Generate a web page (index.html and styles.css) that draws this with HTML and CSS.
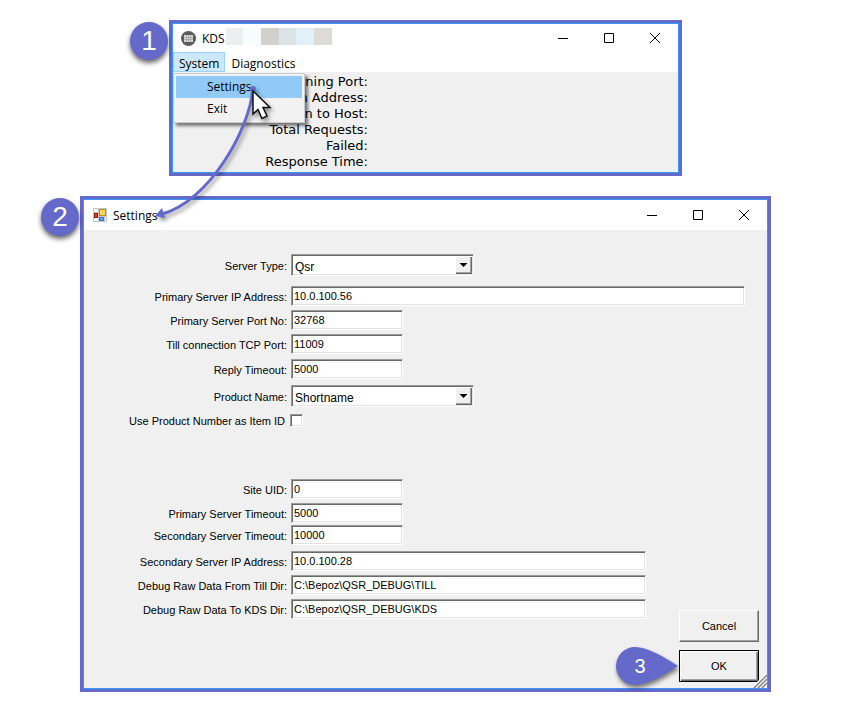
FILE: index.html
```
<!DOCTYPE html>
<html lang="en">
<head>
  <meta charset="UTF-8">
  <meta name="viewport" content="width=device-width, initial-scale=1">
  <title>KDS Settings</title>
  <link rel="stylesheet" href="styles.css">
</head>
<body>

<main class="guide">

  <section class="window main-window">
    <span class="badge">1</span>
    <div class="frame">
      <header class="titlebar">
        <svg class="app-icon" width="15" height="15" viewBox="0 0 15 15">
          <circle cx="7.5" cy="7.5" r="7.5" fill="#5c5c5c"/>
          <rect x="3" y="4" width="9" height="7" fill="#d8d8d8"/>
          <path d="M3 6.5h9M3 8.5h9M5.5 4v7M7.5 4v7M9.5 4v7" stroke="#999" stroke-width="0.6"/>
        </svg>
        <h1>KDS</h1>
        <div class="swatches"><i></i><i></i><i></i><i></i><i></i><i></i></div>
        <div class="controls">
          <button type="button" aria-label="Minimize"><svg width="10" height="10"><path d="M0 5.5h10"/></svg></button>
          <button type="button" aria-label="Maximize"><svg width="10" height="10"><path d="M.5.5h9v9h-9z"/></svg></button>
          <button type="button" aria-label="Close"><svg width="10" height="10"><path d="M0 0l10 10M10 0L0 10"/></svg></button>
        </div>
      </header>
      <nav class="menubar">
        <div class="menu">
          <button type="button" class="menu-item open">System</button>
          <div class="dropdown">
            <button type="button" class="selected">Settings</button>
            <button type="button">Exit</button>
          </div>
        </div>
        <button type="button" class="menu-item">Diagnostics</button>
      </nav>
      <ul class="stats">
        <li>Listening Port:</li>
        <li>Station Address:</li>
        <li>Connection to Host:</li>
        <li>Total Requests:</li>
        <li>Failed:</li>
        <li>Response Time:</li>
      </ul>
    </div>
  </section>

  <section class="window settings-window">
    <span class="badge">2</span>
    <div class="frame">
      <header class="titlebar">
        <svg class="app-icon" width="14" height="14" viewBox="0 0 14 14">
          <path d="M.5.5h13v13H.5zM.5 4.5h5M5.5.5v13M.5 9.5h5M5.5 8.5h8M11.5 8.5v5" fill="#fff" stroke="#c3c3c3"/>
          <rect x="6.5" y="1.5" width="6" height="6" fill="#fbd75b" stroke="#c09010"/>
          <rect x="1.5" y="5.5" width="3" height="4" fill="#d8432c" stroke="#a01808"/>
          <rect x="6.5" y="9.5" width="4" height="3" fill="#5b9bf0" stroke="#3c78d8"/>
        </svg>
        <h2>Settings</h2>
        <div class="controls">
          <button type="button" aria-label="Minimize"><svg width="10" height="10"><path d="M0 5.5h10"/></svg></button>
          <button type="button" aria-label="Maximize"><svg width="10" height="10"><path d="M.5.5h9v9h-9z"/></svg></button>
          <button type="button" aria-label="Close"><svg width="10" height="10"><path d="M0 0l10 10M10 0L0 10"/></svg></button>
        </div>
      </header>

      <form class="settings">
        <div class="fields server">
          <div class="row select-row">
            <label for="server-type">Server Type:</label>
            <span class="combo">
              <select id="server-type"><option>Qsr</option></select>
              <svg class="combo-arrow" width="17" height="18"><path d="M4.5 7h8l-4 4z"/></svg>
            </span>
          </div>
          <div class="row wide-gap">
            <label for="primary-ip">Primary Server IP Address:</label>
            <input class="long" id="primary-ip" type="text" value="10.0.100.56">
          </div>
          <div class="row">
            <label for="primary-port">Primary Server Port No:</label>
            <input id="primary-port" type="text" value="32768">
          </div>
          <div class="row">
            <label for="till-port">Till connection TCP Port:</label>
            <input id="till-port" type="text" value="11009">
          </div>
          <div class="row loose-gap">
            <label for="reply-timeout">Reply Timeout:</label>
            <input id="reply-timeout" type="text" value="5000">
          </div>
          <div class="row select-row mid-gap">
            <label for="product-name">Product Name:</label>
            <span class="combo">
              <select id="product-name"><option>Shortname</option></select>
              <svg class="combo-arrow" width="17" height="18"><path d="M4.5 7h8l-4 4z"/></svg>
            </span>
          </div>
          <div class="row check-row mid-gap">
            <label for="use-number">Use Product Number as Item ID</label>
            <input id="use-number" type="checkbox">
          </div>
        </div>

        <div class="bottom">
          <div class="fields site">
            <div class="row">
              <label for="site-uid">Site UID:</label>
              <input id="site-uid" type="text" value="0">
            </div>
            <div class="row">
              <label for="primary-timeout">Primary Server Timeout:</label>
              <input id="primary-timeout" type="text" value="5000">
            </div>
            <div class="row tight-gap">
              <label for="secondary-timeout">Secondary Server Timeout:</label>
              <input id="secondary-timeout" type="text" value="10000">
            </div>
            <div class="row mid-gap">
              <label for="secondary-ip">Secondary Server IP Address:</label>
              <input class="long" id="secondary-ip" type="text" value="10.0.100.28">
            </div>
            <div class="row">
              <label for="debug-till">Debug Raw Data From Till Dir:</label>
              <input class="long" id="debug-till" type="text" value="C:\Bepoz\QSR_DEBUG\TILL">
            </div>
            <div class="row">
              <label for="debug-kds">Debug Raw Data To KDS Dir:</label>
              <input class="long" id="debug-kds" type="text" value="C:\Bepoz\QSR_DEBUG\KDS">
            </div>
          </div>
          <div class="actions">
            <button type="button">Cancel</button>
            <div class="ok">
              <button type="button" class="default">OK</button>
              <div class="callout">
                <svg width="63" height="38"><path d="M62 19C48 10 32 0 19 0A19 19 0 0 0 19 38C32 38 48 28 62 19z"/></svg>
                <span>3</span>
              </div>
            </div>
          </div>
        </div>
      </form>
      <svg class="grip" width="14" height="14"><path d="M0 14L14 0M5 14l9-9M10 14l4-4" stroke="#fff" stroke-width="3"/><path d="M1 14L14 1M5 14l9-9M9 14l5-5" stroke="#808080" stroke-width="1.5"/></svg>
    </div>
  </section>

  <!-- arrow from the menu entry to the window that it opens, and the pointer -->
  <svg class="flow-arrow" width="130" height="145" viewBox="150 80 130 145">
    <g class="shadowed">
      <path d="M253 88C250 130 208 202 162 214" fill="none" stroke="#6569ca" stroke-width="3"/>
      <circle cx="253" cy="89" r="3" fill="#6569ca"/>
      <path d="M155 216L162 208L165 218z" fill="#6569ca"/>
    </g>
    <path class="shadowed" d="M253 91V114L258 109.500L262 118.500L267 116L263 107.500H270z" fill="#fff" stroke="#111" stroke-width="1.5"/>
  </svg>

</main>

</body>
</html>
```

FILE: styles.css
```
* {
  box-sizing: border-box;
}
body {
  margin: 0;
  background: #fff;
  color: #000;
  font-family: "Open Sans", "Noto Sans", sans-serif;
  font-size: 12px;
}
button, input, select {
  font: inherit;
  color: inherit;
}
.guide {
  position: relative;
  padding: 20px 80px;
}

/* windows */
.window {
  position: relative;
  border: 3px solid #6569ca;
}
.main-window {
  margin: 0 89px 20px;
}
.frame {
  position: relative;
  border: 1px solid #3399ff;
  background: #f0f0f0;
}
.titlebar {
  display: flex;
  align-items: center;
  height: 28px;
  padding-left: 8px;
  background: #fff;
}
.settings-window .titlebar {
  height: 30px;
  padding-left: 9px;
}
.titlebar h1,
.titlebar h2 {
  margin: 0 0 0 6px;
  font-size: 12px;
  font-weight: normal;
}
.swatches {
  display: flex;
  align-self: flex-start;
  width: 106px;
  margin: 4px 0 0 1px;
}
.swatches i {
  flex: 1;
  height: 17px;
  background: #ebeff0;
}
.swatches i:nth-child(2) { background: #f7fdff; }
.swatches i:nth-child(3) { background: #d3cfca; }
.swatches i:nth-child(4) { background: #dbe3e6; }
.swatches i:nth-child(5) { background: #e1f0f9; }
.swatches i:nth-child(6) { background: #dedbd7; }
.controls {
  display: flex;
  margin-left: auto;
}
.controls button {
  display: flex;
  align-items: center;
  justify-content: center;
  width: 46px;
  height: 28px;
  padding: 0;
  border: 0;
  background: none;
}
.controls path {
  fill: none;
  stroke: #000;
}

/* menu */
.menubar {
  display: flex;
  height: 20px;
  background: #fff;
}
.menu {
  position: relative;
}
.menu-item {
  height: 20px;
  padding: 1px 5px 0;
  border: 1px solid transparent;
  background: none;
  line-height: 20px;
}
.menu-item.open {
  background: #cce8ff;
  border-color: #99d1ff;
}
.dropdown {
  position: absolute;
  top: 21px;
  left: 0;
  z-index: 1;
  display: flex;
  flex-direction: column;
  width: 132px;
  padding: 2px;
  border: 1px solid #ccc;
  background: #f2f2f2;
  box-shadow: 3px 3px 3px rgba(0, 0, 0, 0.5);
}
.dropdown button {
  height: 22px;
  padding: 0 0 1px 31px;
  border: 0;
  background: none;
  text-align: left;
}
.dropdown .selected {
  background: #91c9f7;
}
.stats {
  width: 195px;
  margin: 0;
  padding: 2px 0;
  list-style: none;
  font-family: "DejaVu Sans", sans-serif;
  font-size: 13px;
  line-height: 16px;
  text-align: right;
  white-space: nowrap;
}

/* settings form */
.settings {
  padding: 24px 8px 6px 0;
  font-family: "Liberation Sans", Arial, sans-serif;
}
.fields {
  display: flex;
  flex-direction: column;
}
.server {
  padding-right: 14px;
}
.row {
  display: flex;
  align-items: center;
  margin-top: 5px;
}
.row:first-child { margin-top: 0; }
.row.tight-gap { margin-top: 3px; }
.row.loose-gap { margin-top: 6px; }
.row.mid-gap { margin-top: 7px; }
.row.wide-gap { margin-top: 10px; }
.row label,
.row input[type="text"] {
  font-size: 11px;
}
.row label {
  flex: none;
  width: 203px;
  margin-right: 4px;
  padding-top: 4px;
  line-height: 15px;
  text-align: right;
  white-space: nowrap;
}
.select-row label {
  padding-top: 2px;
}
.row input[type="text"],
.combo {
  border: 1px solid;
  border-color: #9a9a9a #fff #fff #9a9a9a;
  background: #fff;
  box-shadow: inset 1px 1px #696969, inset -1px -1px #e3e3e3;
}
.row input[type="text"] {
  width: 112px;
  height: 20px;
  margin-bottom: -1px;
  padding: 0 2px 1px;
}
.row input.long {
  flex: 1;
  min-width: 0;
}
.combo {
  display: flex;
  width: 183px;
  height: 22px;
  padding: 1px;
}
.combo select {
  flex: 1;
  appearance: none;
  padding: 3px 2px 0;
  border: 0;
  background: none;
}
.combo-arrow {
  background: #f0f0f0;
  box-shadow: inset 1px 1px #fff, inset -1px -1px #696969, inset -2px -2px #a0a0a0;
}
.check-row {
  height: 13px;
}
.check-row label {
  width: 201px;
  margin-right: 5px;
  padding-top: 2px;
}
.check-row input {
  appearance: none;
  width: 13px;
  height: 13px;
  margin: 0;
  border: 1px solid;
  border-color: #9a9a9a #fff #fff #9a9a9a;
  background: #fff;
  box-shadow: inset 1px 1px #696969, inset -1px -1px #e3e3e3;
}
.bottom {
  display: flex;
  align-items: flex-end;
  padding-top: 52px;
}
.site {
  flex: 1;
  padding: 0 33px 64px 0;
}
.actions {
  display: flex;
  flex-direction: column;
  gap: 8px;
}
.actions button {
  display: block;
  width: 80px;
  height: 32px;
  border: 1px solid;
  border-color: #fff #696969 #696969 #fff;
  background: #f0f0f0;
  font-size: 11px;
  box-shadow: inset -1px -1px #a0a0a0;
}
.actions .default {
  border-color: #000;
  box-shadow: inset 1px 1px #fff, inset -1px -1px #696969, inset -2px -2px #a0a0a0;
}
.ok {
  position: relative;
}
.grip {
  position: absolute;
  right: 0;
  bottom: 0;
}

/* step markers */
.badge {
  position: absolute;
  top: -1px;
  left: -42px;
  width: 38px;
  height: 38px;
  border-radius: 50%;
  background: #6569ca;
  box-shadow: 0 3px 5px rgba(0, 0, 0, 0.6);
  color: #fff;
  font-family: "Liberation Sans", Arial, sans-serif;
  font-size: 28px;
  line-height: 38px;
  text-align: center;
}
.callout {
  position: absolute;
  top: -3px;
  left: -63px;
  z-index: 1;
  width: 63px;
  height: 38px;
  color: #fff;
}
.callout svg {
  position: absolute;
  overflow: visible;
  fill: #6569ca;
  filter: drop-shadow(1px 3px 2px rgba(0, 0, 0, 0.5));
}
.callout span {
  position: relative;
  display: block;
  width: 48px;
  font-size: 20px;
  line-height: 38px;
  text-align: center;
}
.flow-arrow {
  position: absolute;
  top: 80px;
  left: 150px;
  z-index: 2;
  overflow: visible;
  pointer-events: none;
}
.shadowed {
  filter: drop-shadow(2px 3px 2px rgba(0, 0, 0, 0.4));
}
```
